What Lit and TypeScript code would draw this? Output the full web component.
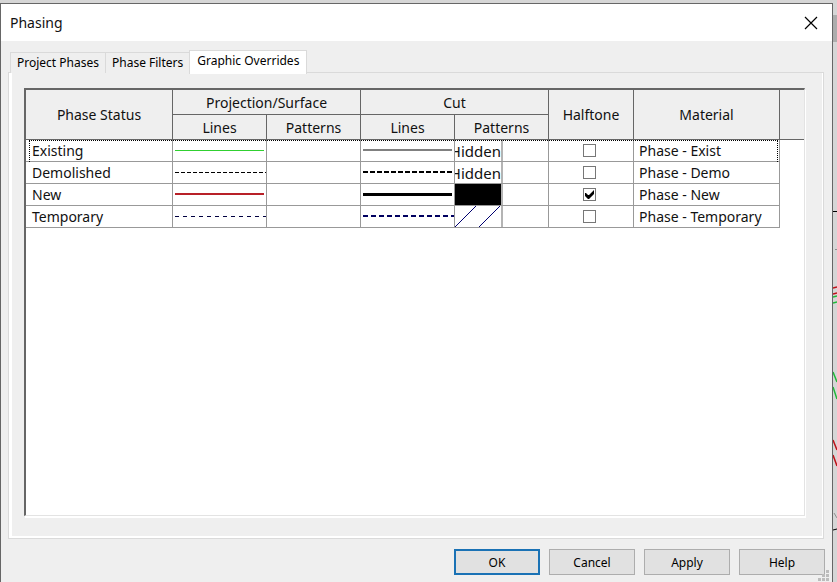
import { LitElement, html, svg, css } from "lit";
import { customElement, state } from "lit/decorators.js";

interface Stroke {
  color: string;
  width: number;
  dash?: string;
}

interface Phase {
  name: string;
  projection: Stroke;
  cut: Stroke;
  pattern: "hidden" | "solid" | "diagonal";
  halftone: boolean;
  material: string;
}

const PHASES: Phase[] = [
  {
    name: "Existing",
    projection: { color: "#30d030", width: 1 },
    cut: { color: "#808080", width: 2 },
    pattern: "hidden",
    halftone: false,
    material: "Phase - Exist",
  },
  {
    name: "Demolished",
    projection: { color: "#000000", width: 1, dash: "4 2" },
    cut: { color: "#000000", width: 2, dash: "5 2" },
    pattern: "hidden",
    halftone: false,
    material: "Phase - Demo",
  },
  {
    name: "New",
    projection: { color: "#b82028", width: 2 },
    cut: { color: "#000000", width: 3 },
    pattern: "solid",
    halftone: true,
    material: "Phase - New",
  },
  {
    name: "Temporary",
    projection: { color: "#000040", width: 1, dash: "4 4" },
    cut: { color: "#000060", width: 2, dash: "5 3" },
    pattern: "diagonal",
    halftone: false,
    material: "Phase - Temporary",
  },
];

const TABS = ["Project Phases", "Phase Filters", "Graphic Overrides"];

@customElement("app-root")
export class AppRoot extends LitElement {
  static styles = css`
    :host {
      display: block;
      position: relative;
      box-sizing: border-box;
      min-height: 100vh;
      padding: 3px 4px 0 0;
      background: #d6d6d6;
      color: #111;
      font-family: "Noto Sans", "Open Sans", sans-serif;
      font-size: 14px;
      line-height: 20px;
    }
    * {
      box-sizing: border-box;
    }
    .canvas {
      position: absolute;
      top: 0;
      right: 0;
      width: 4px;
      height: 582px;
    }
    .dialog {
      position: relative;
      display: flex;
      flex-direction: column;
      min-height: calc(100vh - 3px);
      border: 1px solid #666;
      border-bottom: 0;
      background: #efefef;
    }
    .title-bar {
      display: flex;
      align-items: center;
      justify-content: space-between;
      height: 37px;
      padding: 0 8px 0 9px;
      background: #fff;
    }
    .title {
      margin: 0;
      font-size: 14px;
      font-weight: 400;
    }
    .close {
      display: flex;
      padding: 6px;
      border: 0;
      background: none;
    }
    .tabs {
      display: flex;
      align-items: flex-end;
      height: 32px;
      padding: 0 9px;
      position: relative;
      z-index: 1;
    }
    .tab {
      height: 21px;
      padding: 0 6px;
      border: 1px solid #dadada;
      border-right: 0;
      border-bottom: 0;
      background: #efefef;
      color: #000;
      font: 12px/20px "Noto Sans", sans-serif;
      white-space: nowrap;
    }
    .tab.active {
      height: 24px;
      margin-bottom: -1px;
      padding: 0 7px 3px;
      border-right: 1px solid #dadada;
      background: #fff;
    }
    .panel {
      flex: 1;
      display: flex;
      margin: -1px 8px 0 7px;
      padding: 15px 18px 22px 15px;
      border: 1px solid #dadada;
      box-shadow: inset 3px 0 #fff, inset -1px -2px #fff;
    }
    .grid-box {
      flex: 1;
      border: solid;
      border-width: 2px 1px 1px 2px;
      border-color: #666 #e3e3e3 #e3e3e3 #666;
      background: #fff;
      box-shadow: 1px 2px #fff;
    }
    .grid {
      width: 100%;
      table-layout: fixed;
      border-collapse: separate;
      border-spacing: 0;
    }
    .c-name { width: 147px; }
    .c-sample { width: 94px; }
    .c-half { width: 85px; }
    .c-material { width: 146px; }
    .grid th {
      height: 25px;
      padding: 1px 0 0;
      border: solid #666;
      border-width: 0 1px 1px 0;
      background: #efefef;
      font-weight: 400;
    }
    .grid .filler {
      border-right: 0;
    }
    .grid td,
    .grid .name {
      height: 22px;
      padding: 0;
      border: solid #999;
      border-width: 0 1px 1px 0;
      background: #fff;
      text-align: left;
      line-height: 20px;
    }
    .grid .name {
      padding: 1px 0 0 6px;
    }
    .grid .material {
      padding: 1px 0 0 5px;
    }
    .focused {
      position: relative;
    }
    .focused::after {
      content: "";
      position: absolute;
      inset: 0 26px 0 3px;
      border: 1px dotted #000;
      border-bottom: 0;
      pointer-events: none;
    }
    .line {
      display: block;
      width: 93px;
      height: 21px;
    }
    .swatch {
      display: flex;
      justify-content: flex-end;
      width: 48px;
      height: 21px;
      border-right: 2px solid #b4b4b4;
      overflow: hidden;
      font-size: 15px;
      line-height: 22px;
      white-space: nowrap;
    }
    .swatch.solid {
      background: #000;
    }
    .check-cell {
      display: flex;
      justify-content: center;
      padding-right: 3px;
    }
    .check {
      appearance: none;
      width: 13px;
      height: 13px;
      margin: 0;
      border: 1px solid #777;
      background: #fff;
    }
    .check:checked {
      background: #fff
        url("data:image/svg+xml,%3Csvg xmlns='http://www.w3.org/2000/svg' width='11' height='11'%3E%3Cpath d='M1 4v3l3 3h1l5-5V1L5 6H4L2 4z'/%3E%3C/svg%3E");
    }
    .actions {
      display: flex;
      justify-content: flex-end;
      gap: 9px;
      padding: 10px 7px 7px;
    }
    .action {
      width: 86px;
      height: 26px;
      padding: 1px 0 0;
      border: 1px solid #adadad;
      background: #e1e1e1;
      color: #000;
      font: 12px/20px "Noto Sans", sans-serif;
    }
    .action.primary {
      border: 2px solid #1a72b5;
    }
    .grip {
      position: absolute;
      right: 2px;
      bottom: 0;
    }
  `;

  @state() private phases = PHASES;
  @state() private activeTab = 2;

  private toggle(index: number) {
    this.phases = this.phases.map((p, i) =>
      i === index ? { ...p, halftone: !p.halftone } : p
    );
  }

  private line(s: Stroke) {
    const y = s.width % 2 ? 10.5 : 10;
    return html`<svg class="line" viewBox="0 0 93 21" aria-hidden="true">
      ${svg`<line x1="2" x2=${s.dash ? 93 : 91} y1=${y} y2=${y} stroke=${s.color} stroke-width=${s.width} stroke-dasharray=${s.dash ?? "none"} />`}
    </svg>`;
  }

  private pattern(kind: Phase["pattern"]) {
    if (kind === "hidden") return html`<div class="swatch">Hidden</div>`;
    if (kind === "solid") return html`<div class="swatch solid"></div>`;
    return html`<div class="swatch">
      <svg width="46" height="21" aria-hidden="true">
        <path d="M0 21L21 0M24 21L45 0" stroke="#000070" fill="none" />
      </svg>
    </div>`;
  }

  render() {
    return html`
      <svg class="canvas" viewBox="0 0 4 582" fill="none" aria-hidden="true">
        <path d="M0 15h4v27h-4z" fill="#adadad" />
        <path d="M0 211.5h4M0 530l4-1" stroke="#000" />
        <path d="M2 249.5h2M1 513l3 5" stroke="#909090" />
        <path d="M0 288l4-1M0 294l4-1M0 440l4 10M0 455l4 11" stroke="#c01018" stroke-width="1.5" />
        <path d="M0 297l4-1M0 303l4-1M0 372l4 10M0 387l4 12" stroke="#20b838" stroke-width="1.5" />
      </svg>
      <div class="dialog" role="dialog" aria-labelledby="title">
        <header class="title-bar">
          <h1 class="title" id="title">Phasing</h1>
          <button class="close" aria-label="Close">
            <svg width="14" height="14" viewBox="0 0 14 14">
              <path d="M1 1L13 13M13 1L1 13" stroke="#000" stroke-width="1.2" />
            </svg>
          </button>
        </header>
        <div class="tabs" role="tablist">
          ${TABS.map(
            (t, i) => html`<button
              class="tab ${i === this.activeTab ? "active" : ""}"
              role="tab"
              aria-selected=${i === this.activeTab}
              @click=${() => (this.activeTab = i)}
            >${t}</button>`
          )}
        </div>
        <main class="panel" role="tabpanel">
          <div class="grid-box">
            <table class="grid">
              <colgroup>
                <col class="c-name" />
                <col class="c-sample" />
                <col class="c-sample" />
                <col class="c-sample" />
                <col class="c-sample" />
                <col class="c-half" />
                <col class="c-material" />
                <col />
              </colgroup>
              <thead>
                <tr>
                  <th rowspan="2">Phase Status</th>
                  <th colspan="2">Projection/Surface</th>
                  <th colspan="2">Cut</th>
                  <th rowspan="2">Halftone</th>
                  <th rowspan="2">Material</th>
                  <th rowspan="2" class="filler"></th>
                </tr>
                <tr>
                  <th>Lines</th>
                  <th>Patterns</th>
                  <th>Lines</th>
                  <th>Patterns</th>
                </tr>
              </thead>
              <tbody>
                ${this.phases.map(
                  (p, i) => html`<tr class=${i === 0 ? "focused" : ""}>
                    <th class="name" scope="row">${p.name}</th>
                    <td>${this.line(p.projection)}</td>
                    <td></td>
                    <td>${this.line(p.cut)}</td>
                    <td>${this.pattern(p.pattern)}</td>
                    <td>
                      <div class="check-cell">
                        <input
                          class="check"
                          type="checkbox"
                          aria-label="Halftone for ${p.name}"
                          .checked=${p.halftone}
                          @change=${() => this.toggle(i)}
                        />
                      </div>
                    </td>
                    <td class="material">${p.material}</td>
                  </tr>`
                )}
              </tbody>
            </table>
          </div>
        </main>
        <footer class="actions">
          <button class="action primary">OK</button>
          <button class="action">Cancel</button>
          <button class="action">Apply</button>
          <button class="action">Help</button>
        </footer>
        <svg class="grip" width="12" height="12" viewBox="0 0 12 12" aria-hidden="true">
          <path
            d="M8 0h3v3h-3zM8 4h3v3h-3zM4 4h3v3h-3zM8 8h3v3h-3zM4 8h3v3h-3zM0 8h3v3h-3z"
            fill="#bcbcbc"
          />
        </svg>
      </div>
    `;
  }
}
